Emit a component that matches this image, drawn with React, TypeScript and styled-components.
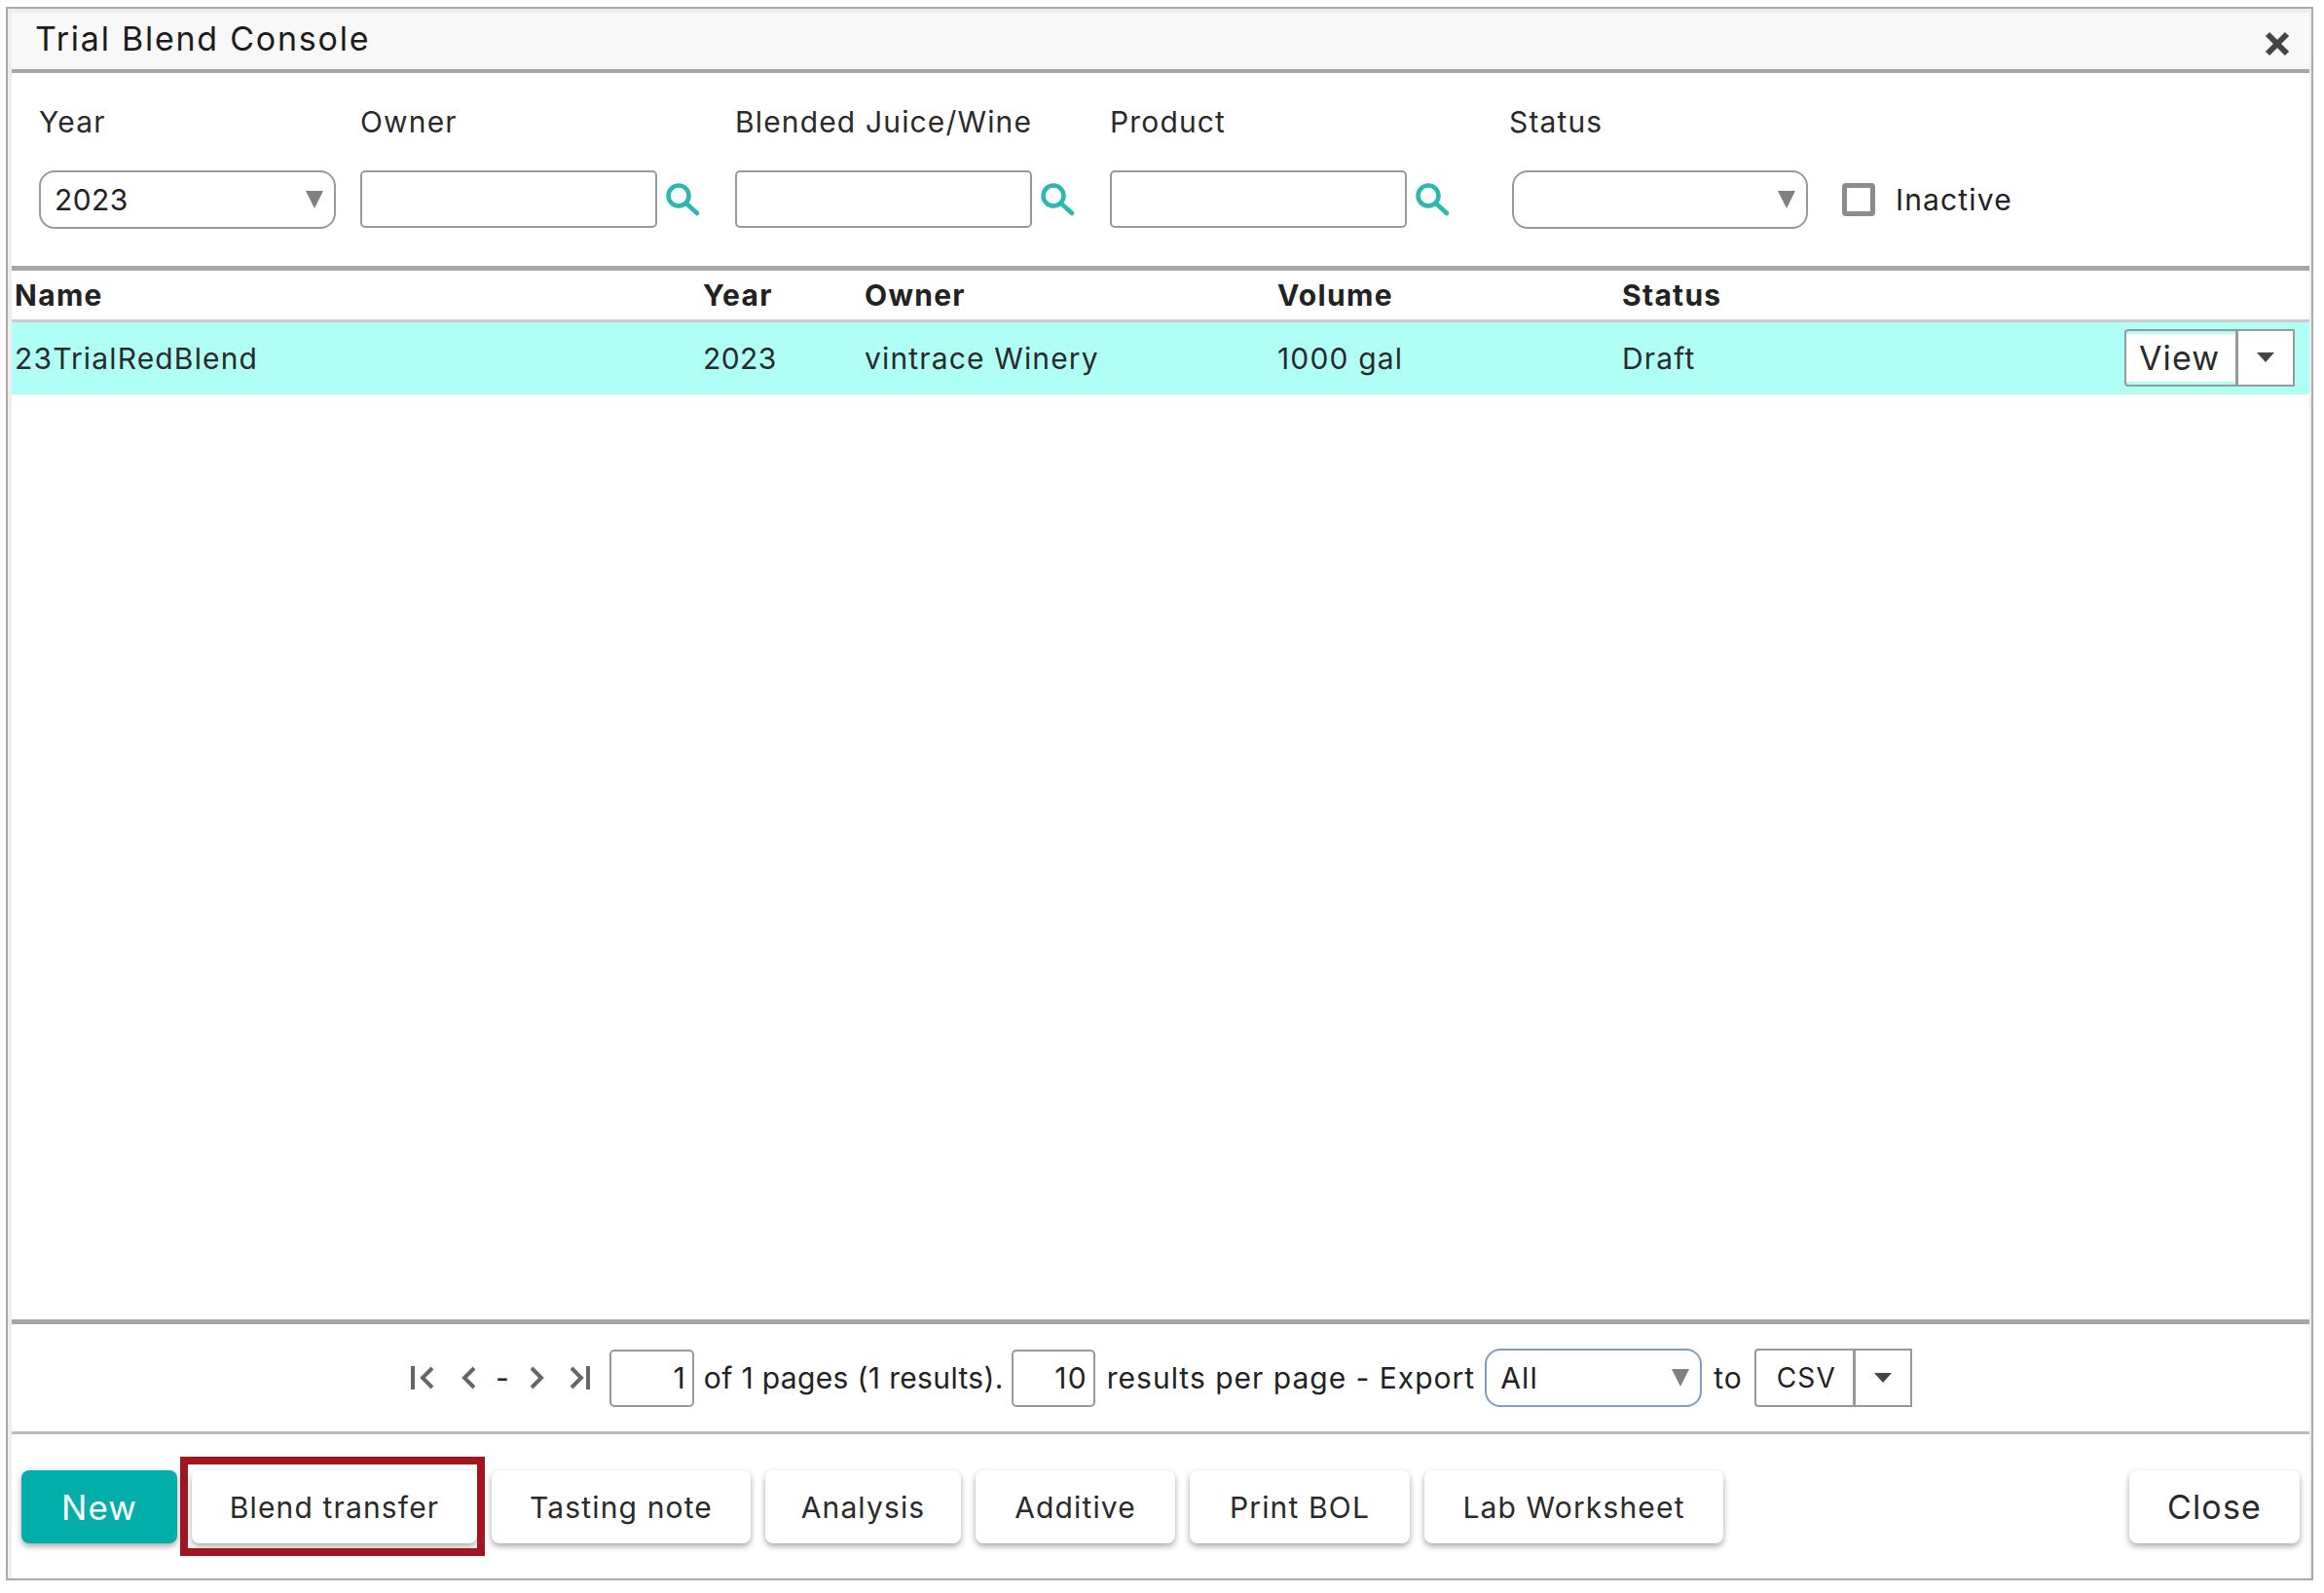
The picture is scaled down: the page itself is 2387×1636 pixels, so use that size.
import React from "react";
import styled, { createGlobalStyle } from "styled-components";

const GlobalStyle = createGlobalStyle`
  html, body {
    margin: 0;
    padding: 0;
    background: #fff;
  }

  body {
    font-family: Inter, "Liberation Sans", sans-serif;
    font-size: 30px;
    letter-spacing: 1.15px;
    color: #222;
  }
`;

const Frame = styled.div`
  box-sizing: border-box;
  width: 2370px;
  height: 1616px;
  margin: 7px 0 0 6px;
  padding: 4px 2px 0 4px;
  display: flex;
  border: 2px solid #aaa;
  background: #eee;
`;

const Panel = styled.section`
  flex: 1;
  display: flex;
  flex-direction: column;
  background: #fff;
`;

const TitleBar = styled.header`
  box-sizing: border-box;
  height: 62px;
  padding: 0 14px 0 24px;
  display: flex;
  align-items: center;
  justify-content: space-between;
  background: #f8f8f8;
  border-bottom: 4px solid #a5a5a5;
`;

const Title = styled.h1`
  margin: 0 0 6px;
  font-size: 34px;
  font-weight: 400;
  letter-spacing: 1.75px;
  color: #1c1c1c;
`;

const CloseIcon = styled.svg`
  width: 26px;
  height: 26px;
  margin: 6px 6px 0 0;
`;

const Filters = styled.div`
  box-sizing: border-box;
  height: 198px;
  padding: 28px 0 0 28px;
  display: grid;
  grid-template-columns: 330px 385px 385px 410px auto;
  grid-template-rows: 44px auto;
  row-gap: 28px;
`;

const Label = styled.label`
  line-height: 44px;
  color: #2a2a2a;
`;

const Control = styled.div`
  display: flex;
  align-items: center;
  align-self: start;
`;

const Select = styled.div<{ $width: number; $focus?: boolean; $offset?: number }>`
  box-sizing: border-box;
  position: relative;
  width: ${({ $width }) => $width}px;
  height: 60px;
  margin-left: ${({ $offset }) => $offset || 0}px;
  padding-left: 14px;
  display: flex;
  align-items: center;
  border: 2px solid ${({ $focus }) => ($focus ? "#7d9fc4" : "#999")};
  border-radius: 16px;
  background: #fff;

  &::after {
    content: "";
    position: absolute;
    right: 11px;
    top: 19px;
    border-left: 9px solid transparent;
    border-right: 9px solid transparent;
    border-top: 18px solid #808080;
  }
`;

const Digits = styled.span`
  letter-spacing: 0.4px;
`;

const Input = styled.div<{ $width: number }>`
  box-sizing: border-box;
  width: ${({ $width }) => $width}px;
  height: 59px;
  padding-right: 6px;
  display: flex;
  align-items: center;
  justify-content: flex-end;
  border: 2px solid #999;
  border-radius: 5px;
  background: #fff;
`;

const SearchIcon = styled.svg`
  width: 34px;
  height: 34px;
  margin-left: 9px;
`;

const Checkbox = styled.span`
  box-sizing: border-box;
  width: 34px;
  height: 34px;
  margin: 0 21px 0 35px;
  border: 5px solid #8c8c8c;
  border-radius: 4px;
  background: #fff;
`;

const columns = "707px 166px 424px 354px 1fr";

const HeadRow = styled.div`
  box-sizing: border-box;
  height: 58px;
  padding-left: 3px;
  display: grid;
  grid-template-columns: ${columns};
  align-items: center;
  border-top: 5px solid #a8a5a2;
  border-bottom: 3px solid #ccc;
  font-weight: 700;
  letter-spacing: 1.3px;
  color: #222;
`;

const DataRow = styled.div`
  box-sizing: border-box;
  height: 74px;
  padding-left: 3px;
  display: grid;
  grid-template-columns: ${columns};
  align-items: center;
  background: #b0fff6;
  color: #2a2a2a;
`;

const StatusCell = styled.div`
  display: flex;
  align-items: center;
  justify-content: space-between;
  padding-right: 15px;
`;

const ViewGroup = styled.div`
  box-sizing: border-box;
  width: 175px;
  height: 59px;
  margin-top: -2px;
  display: flex;
  border: 2px solid #999;
  border-radius: 4px 0 0 4px;
`;

const ViewLabel = styled.span`
  width: 112px;
  margin: 3px 0;
  padding-left: 13px;
  box-sizing: border-box;
  display: flex;
  align-items: center;
  background: #fff;
  font-size: 34px;
`;

const Caret = styled.span`
  flex: 1;
  display: flex;
  align-items: center;
  justify-content: center;
  background: #fff;
  border-left: 3px solid #999;

  &::after {
    content: "";
    border-left: 9px solid transparent;
    border-right: 9px solid transparent;
    border-top: 10px solid #444;
  }
`;

const Spacer = styled.div`
  flex: 1;
`;

const Pager = styled.div`
  box-sizing: border-box;
  height: 115px;
  padding-left: 409px;
  display: flex;
  align-items: center;
  border-top: 5px solid #a8a5a2;
  white-space: nowrap;
`;

const PagerIcon = styled.svg<{ $after: number }>`
  width: 28px;
  height: 28px;
  margin-right: ${({ $after }) => $after}px;
`;

const PagerText = styled.span<{ $left: number; $right: number; $tight?: boolean }>`
  margin: 0 ${({ $right }) => $right}px 0 ${({ $left }) => $left}px;
  letter-spacing: ${({ $tight }) => ($tight ? "0.35px" : "1px")};
`;

const ExportGroup = styled.div`
  box-sizing: border-box;
  width: 162px;
  height: 60px;
  display: flex;
  border: 2px solid #999;
  border-radius: 4px 0 0 4px;
`;

const ExportLabel = styled.span`
  width: 99px;
  padding-left: 21px;
  box-sizing: border-box;
  display: flex;
  align-items: center;
  font-size: 28px;
`;

const Toolbar = styled.div`
  box-sizing: border-box;
  height: 151px;
  padding: 37px 10px 0 10px;
  display: flex;
  align-items: flex-start;
  gap: 15px;
  border-top: 3px solid #bbb;
`;

const Button = styled.button<{ $width: number; $primary?: boolean; $marked?: boolean; $end?: boolean }>`
  position: relative;
  width: ${({ $width }) => $width}px;
  height: 75px;
  margin-left: ${({ $end }) => ($end ? "auto" : "0")};
  padding: 0;
  border: 0;
  border-radius: 8px;
  background: ${({ $primary }) => ($primary ? "#02aeaa" : "#fff")};
  box-shadow: 0 3px 6px rgba(0, 0, 0, 0.35);
  font-family: inherit;
  font-size: ${({ $primary, $end }) => ($primary ? 35 : $end ? 34 : 30)}px;
  letter-spacing: inherit;
  color: ${({ $primary }) => ($primary ? "#fff" : "#2a2a2a")};

  ${({ $marked }) =>
    $marked
      ? `&::after {
          content: "";
          position: absolute;
          inset: -14px -8px -13px -12px;
          border: 8px solid #a31621;
        }`
      : ""}
`;

const Search = () => (
  <SearchIcon viewBox="0 0 34 34" fill="none" stroke="#2bb8b0" strokeWidth="4.5" strokeLinecap="round">
    <circle cx="13" cy="13" r="10.5" />
    <path d="M21 21l11 10" />
  </SearchIcon>
);

const pagerPaths: Record<string, string> = {
  first: "M3 2v24M23 4L13 14l10 10",
  prev: "M18 4L8 14l10 10",
  next: "M8 4l10 10L8 24",
  last: "M4 4l10 10L4 24M21 2v24",
};

const PagerButton = ({ kind, after }: { kind: string; after: number }) => (
  <PagerIcon $after={after} viewBox="0 0 28 28" fill="none" stroke="#666" strokeWidth="4">
    <path d={pagerPaths[kind]} />
  </PagerIcon>
);

const actions = [
  { label: "Blend transfer", width: 293, marked: true },
  { label: "Tasting note", width: 266 },
  { label: "Analysis", width: 201 },
  { label: "Additive", width: 205 },
  { label: "Print BOL", width: 226 },
  { label: "Lab Worksheet", width: 307 },
];

const App: React.FC = () => (
  <>
    <GlobalStyle />
    <Frame>
      <Panel>
        <TitleBar>
          <Title>Trial Blend Console</Title>
          <CloseIcon viewBox="0 0 26 26" fill="none" stroke="#444" strokeWidth="6">
            <path d="M3 3l20 20M23 3L3 23" />
          </CloseIcon>
        </TitleBar>

        <Filters>
          <Label>Year</Label>
          <Label>Owner</Label>
          <Label>Blended Juice/Wine</Label>
          <Label>Product</Label>
          <Label>Status</Label>
          <Control>
            <Select $width={305}>
              <Digits>2023</Digits>
            </Select>
          </Control>
          <Control>
            <Input $width={305} />
            <Search />
          </Control>
          <Control>
            <Input $width={305} />
            <Search />
          </Control>
          <Control>
            <Input $width={305} />
            <Search />
          </Control>
          <Control>
            <Select $width={304} $offset={3} />
            <Checkbox />
            Inactive
          </Control>
        </Filters>

        <HeadRow>
          <span>Name</span>
          <span>Year</span>
          <span>Owner</span>
          <span>Volume</span>
          <span>Status</span>
        </HeadRow>
        <DataRow>
          <span>23TrialRedBlend</span>
          <Digits>2023</Digits>
          <span>vintrace Winery</span>
          <span>1000 gal</span>
          <StatusCell>
            Draft
            <ViewGroup>
              <ViewLabel>View</ViewLabel>
              <Caret />
            </ViewGroup>
          </StatusCell>
        </DataRow>

        <Spacer />

        <Pager>
          <PagerButton kind="first" after={20} />
          <PagerButton kind="prev" after={12} />
          <PagerText $left={0} $right={14}>-</PagerText>
          <PagerButton kind="next" after={17} />
          <PagerButton kind="last" after={15} />
          <Input $width={87}>1</Input>
          <PagerText $left={10} $right={8} $tight>of 1 pages (1 results).</PagerText>
          <Input $width={86}>10</Input>
          <PagerText $left={12} $right={10}>results per page - Export</PagerText>
          <Select $width={223} $focus>All</Select>
          <PagerText $left={12} $right={12}>to</PagerText>
          <ExportGroup>
            <ExportLabel>CSV</ExportLabel>
            <Caret />
          </ExportGroup>
        </Pager>

        <Toolbar>
          <Button $width={160} $primary>New</Button>
          {actions.map((action) => (
            <Button key={action.label} $width={action.width} $marked={action.marked}>
              {action.label}
            </Button>
          ))}
          <Button $width={175} $end>Close</Button>
        </Toolbar>
      </Panel>
    </Frame>
  </>
);

export default App;
